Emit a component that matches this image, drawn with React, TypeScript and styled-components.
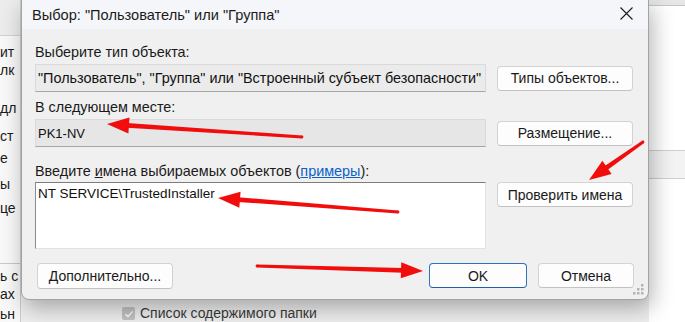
import React from 'react'
import styled, { createGlobalStyle } from 'styled-components'

const GlobalStyle = createGlobalStyle`
  html, body {
    margin: 0;
    padding: 0;
  }
  body {
    width: 685px;
    height: 322px;
    overflow: hidden;
    background: #ffffff;
    font-family: 'Liberation Sans', Arial, sans-serif;
  }
`

const stripLines: { text: string; gap: number }[] = [
  { text: 'ит', gap: 7 },
  { text: 'лк', gap: 0 },
  { text: 'дл', gap: 20 },
  { text: 'ст', gap: 10 },
  { text: 'е', gap: 4 },
  { text: 'ы', gap: 8 },
  { text: 'це', gap: 6 },
]

const stripLinesBottom: { text: string; gap: number }[] = [
  { text: 'ь с', gap: 3 },
  { text: 'ах', gap: 0 },
  { text: 'ьн', gap: 2 },
]

type ArrowProps = { x1: number; y1: number; x2: number; y2: number }

const Arrow: React.FC<ArrowProps> = ({ x1, y1, x2, y2 }) => {
  const len = Math.hypot(x2 - x1, y2 - y1)
  const dx = (x2 - x1) / len
  const dy = (y2 - y1) / len
  const nx = -dy
  const ny = dx
  const headLen = 22
  const headW = 8
  const bx = x2 - dx * headLen
  const by = y2 - dy * headLen
  const tail = 1.4
  const neck = 2.4
  const shaft = [
    [x1 + nx * tail, y1 + ny * tail],
    [bx + dx * 2 + nx * neck, by + dy * 2 + ny * neck],
    [bx + dx * 2 - nx * neck, by + dy * 2 - ny * neck],
    [x1 - nx * tail, y1 - ny * tail],
  ]
  const head = [
    [x2, y2],
    [bx + nx * headW, by + ny * headW],
    [bx - nx * headW, by - ny * headW],
  ]
  const pts = (p: number[][]) => p.map((q) => q.join(',')).join(' ')
  return (
    <g fill="#f20d0d">
      <polygon points={pts(shaft)} />
      <circle cx={x1} cy={y1} r={tail} />
      <polygon points={pts(head)} />
    </g>
  )
}

const App: React.FC = () => {
  return (
    <Desktop>
      <GlobalStyle />
      <SideStrip>
        <StripBand />
        {stripLines.map((l, i) => (
          <StripLine key={i} $gap={l.gap}>
            {l.text}
          </StripLine>
        ))}
        <StripDivider />
        {stripLinesBottom.map((l, i) => (
          <StripLine key={i} $gap={l.gap}>
            {l.text}
          </StripLine>
        ))}
      </SideStrip>
      <MiddleArea>
        <CheckRow>
          <CheckBox $dark />
        </CheckRow>
        <CheckRow>
          <CheckBox>
            <svg width="10" height="10" viewBox="0 0 10 10">
              <path d="M1.5 5.2 L4 7.6 L8.6 2.4" fill="none" stroke="#ffffff" strokeWidth="1.4" />
            </svg>
          </CheckBox>
          <CheckLabel>Список содержимого папки</CheckLabel>
        </CheckRow>
      </MiddleArea>
      <RightArea>
        <RightTopBand />
        <RightBand />
      </RightArea>

      <Dialog>
        <TitleBar>
          <TitleText>Выбор: "Пользователь" или "Группа"</TitleText>
          <CloseButton>
            <svg width="13" height="13" viewBox="0 0 13 13">
              <path d="M0.5 0.5 L12.5 12.5 M12.5 0.5 L0.5 12.5" stroke="#1c1c1c" strokeWidth="1.1" />
            </svg>
          </CloseButton>
        </TitleBar>
        <Body>
          <Label>Выберите тип объекта:</Label>
          <FieldRow $top={3}>
            <Field>"Пользователь", "Группа" или "Встроенный субъект безопасности"</Field>
            <Button>Типы объектов...</Button>
          </FieldRow>
          <Label $top={6}>В следующем месте:</Label>
          <FieldRow $top={3}>
            <Field $dim $latin>
              PK1-NV
            </Field>
            <Button>Размещение...</Button>
          </FieldRow>
          <Label $top={15}>
            Введите <u>и</u>мена выбираемых объектов (<LinkText>примеры</LinkText>):
          </Label>
          <NamesRow>
            <NamesBox>NT SERVICE\TrustedInstaller</NamesBox>
            <Button>Проверить имена</Button>
          </NamesRow>
          <Footer>
            <Button $width={136}>Дополнительно...</Button>
            <FooterRight>
              <Button $width={98} $primary>
                OK
              </Button>
              <Button $width={96}>Отмена</Button>
            </FooterRight>
          </Footer>
        </Body>
        <Grip>
          <svg width="12" height="12" viewBox="0 0 12 12">
            <g fill="#b4b4b4">
              <rect x="8" y="0" width="2.5" height="2.5" />
              <rect x="4" y="4" width="2.5" height="2.5" />
              <rect x="8" y="4" width="2.5" height="2.5" />
              <rect x="0" y="8" width="2.5" height="2.5" />
              <rect x="4" y="8" width="2.5" height="2.5" />
              <rect x="8" y="8" width="2.5" height="2.5" />
            </g>
          </svg>
        </Grip>
      </Dialog>

      <Annotations width="685" height="322" viewBox="0 0 685 322">
        <Arrow x1={302} y1={137} x2={107} y2={124} />
        <Arrow x1={398} y1={212} x2={218} y2={198} />
        <Arrow x1={643} y1={142} x2={589} y2={180} />
        <Arrow x1={257} y1={266} x2={423} y2={271} />
      </Annotations>
    </Desktop>
  )
}

export default App

const Desktop = styled.div`
  position: relative;
  width: 685px;
  height: 322px;
  overflow: hidden;
  display: grid;
  grid-template-columns: 21px 628px 1fr;
  background: #ffffff;
`

const SideStrip = styled.div`
  display: flex;
  flex-direction: column;
  background: #f8f8f8;
  border-right: 1px solid #cdcdcd;
  overflow: hidden;
`

const StripBand = styled.div`
  height: 35px;
  flex-shrink: 0;
  background: #ececec;
  border-bottom: 1px solid #d2d2d2;
`

const StripLine = styled.div<{ $gap: number }>`
  margin-top: ${(p) => p.$gap}px;
  height: 18px;
  line-height: 18px;
  font-size: 14px;
  color: #1a1a1a;
  white-space: nowrap;
  flex-shrink: 0;
`

const StripDivider = styled.div`
  margin-top: 46px;
  height: 1px;
  flex-shrink: 0;
  background: #c8c8c8;
`

const MiddleArea = styled.div`
  display: flex;
  flex-direction: column;
  justify-content: flex-end;
  gap: 5px;
  padding: 0 0 1px 101px;
  background: #eeeeee;
`

const CheckRow = styled.div`
  display: flex;
  align-items: center;
  gap: 5px;
  height: 15px;
`

const CheckBox = styled.div<{ $dark?: boolean }>`
  width: 13px;
  height: 13px;
  border-radius: 2px;
  background: ${(p) => (p.$dark ? '#9a9a9a' : '#c2c2c2')};
  display: flex;
  align-items: center;
  justify-content: center;
`

const CheckLabel = styled.span`
  font-size: 14px;
  line-height: 15px;
  color: #3a3a3a;
  white-space: nowrap;
`

const RightArea = styled.div`
  display: flex;
  flex-direction: column;
  background: #ffffff;
`

const RightTopBand = styled.div`
  height: 5px;
  background: #e6e6e6;
  border-bottom: 1px solid #c6c6c6;
`

const RightBand = styled.div`
  margin-top: 144px;
  height: 27px;
  background: #f3f3f3;
  border-top: 1px solid #cfcfcf;
  border-bottom: 1px solid #cfcfcf;
`

const Dialog = styled.div`
  position: absolute;
  left: 21px;
  top: -1px;
  width: 628px;
  height: 301px;
  box-sizing: border-box;
  display: flex;
  flex-direction: column;
  background: #f0f0f0;
  border: 1px solid #a3a3a3;
  border-radius: 0 0 8px 8px;
  box-shadow: 3px 8px 22px rgba(0, 0, 0, 0.3);
`

const TitleBar = styled.div`
  height: 29px;
  display: flex;
  align-items: center;
  justify-content: space-between;
  padding: 0 15px 0 10px;
  background: #f4f6f9;
`

const TitleText = styled.span`
  font-size: 14.6px;
  color: #1b1b1b;
`

const CloseButton = styled.div`
  display: flex;
  align-items: center;
  margin-top: -3px;
`

const Body = styled.div`
  display: flex;
  flex-direction: column;
  padding: 14px 14px 0 13px;
`

const Label = styled.div<{ $top?: number }>`
  margin-top: ${(p) => p.$top ?? 0}px;
  height: 18px;
  line-height: 18px;
  font-size: 14.4px;
  color: #1a1a1a;
  white-space: nowrap;
`

const LinkText = styled.span`
  color: #0a62c9;
  text-decoration: underline;
`

const FieldRow = styled.div<{ $top?: number }>`
  margin-top: ${(p) => p.$top ?? 0}px;
  display: grid;
  grid-template-columns: 451px 136px;
  column-gap: 11px;
  align-items: center;
`

const Field = styled.div<{ $dim?: boolean; $latin?: boolean }>`
  height: 28px;
  box-sizing: border-box;
  display: flex;
  align-items: center;
  padding-left: 2px;
  font-size: ${(p) => (p.$latin ? '13px' : '14.4px')};
  color: #111111;
  white-space: nowrap;
  overflow: hidden;
  background: ${(p) => (p.$dim ? '#e6e6e6' : '#ebebeb')};
  border: 1px solid #dadada;
  border-bottom-color: #a6a6a6;
`

const NamesRow = styled.div`
  margin-top: 2px;
  display: grid;
  grid-template-columns: 451px 136px;
  column-gap: 11px;
  align-items: start;
`

const NamesBox = styled.div`
  height: 67px;
  box-sizing: border-box;
  padding: 3px 2px;
  font-size: 13.5px;
  line-height: 16px;
  color: #111111;
  background: #ffffff;
  border: 1px solid #e2e2e2;
  border-top-color: #7d7d7d;
  border-left-color: #8a8a8a;
`

const Button = styled.div<{ $width?: number; $primary?: boolean }>`
  width: ${(p) => (p.$width ? `${p.$width}px` : 'auto')};
  height: 25px;
  box-sizing: border-box;
  display: flex;
  align-items: center;
  justify-content: center;
  font-size: 14px;
  color: #1a1a1a;
  white-space: nowrap;
  background: #fdfdfd;
  border: 1px solid ${(p) => (p.$primary ? '#2f72c0' : '#d3d3d3')};
  border-bottom-color: ${(p) => (p.$primary ? '#1f5fae' : '#c2c2c2')};
  border-radius: 4px;
`

const Footer = styled.div`
  margin-top: 14px;
  display: flex;
  align-items: center;
  justify-content: space-between;
  padding-left: 2px;
  & > div {
    height: 26px;
  }
`

const FooterRight = styled.div`
  display: flex;
  gap: 11px;
`

const Grip = styled.div`
  position: absolute;
  right: 3px;
  bottom: 3px;
  display: flex;
`

const Annotations = styled.svg`
  position: absolute;
  left: 0;
  top: 0;
  pointer-events: none;
`
